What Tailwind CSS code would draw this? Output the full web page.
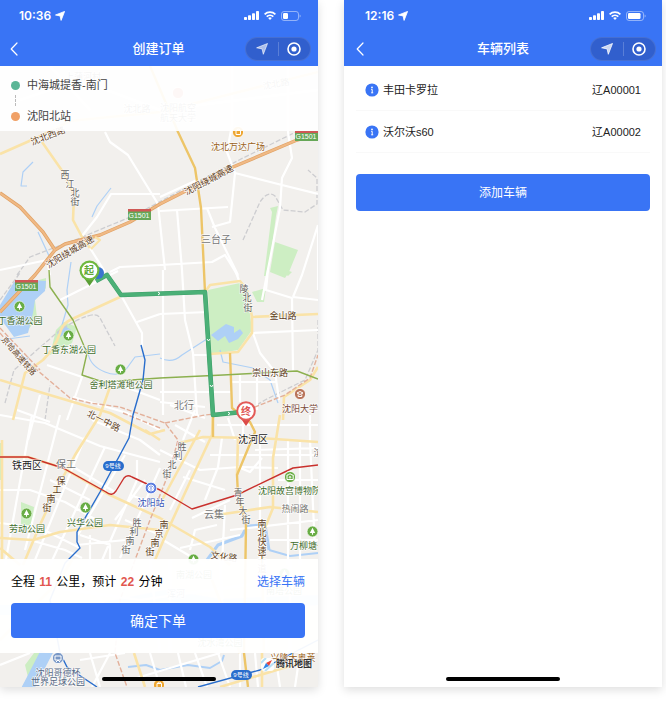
<!DOCTYPE html>
<html lang="zh-CN">
<head>
<meta charset="utf-8">
<meta name="viewport" content="width=device-width, initial-scale=1">
<title>创建订单 / 车辆列表</title>
<script src="https://cdn.jsdelivr.net/npm/@tailwindcss/browser@4"></script>
</head>
<body class="bg-white font-['Liberation_Sans','Noto_Sans_CJK_SC',sans-serif] text-[#222]">
<svg class="hidden" aria-hidden="true">
  <symbol id="nav-arrow" viewBox="0 0 12 12"><path d="M11.5 .5 7.3 11.3 6.1 5.9.6 4.8Z" fill="currentColor" stroke="currentColor" stroke-width="1" stroke-linejoin="round"/></symbol>
  <symbol id="signal" viewBox="0 0 15 9"><g fill="currentColor"><rect y="6" width="3" height="3" rx=".8"/><rect x="4" y="4.3" width="3" height="4.7" rx=".8"/><rect x="8" y="2.2" width="3" height="6.8" rx=".8"/><rect x="12" width="3" height="9" rx=".8"/></g></symbol>
  <symbol id="wifi" viewBox="0 0 12 9"><g fill="none" stroke="currentColor" stroke-width="1.8"><path d="M.6 3.3a7.8 7.8 0 0 1 10.8 0"/><path d="M2.7 5.6a4.8 4.8 0 0 1 6.6 0"/></g><path d="M6 9 4.1 7.1a2.7 2.7 0 0 1 3.8 0Z" fill="currentColor"/></symbol>
  <symbol id="back" viewBox="0 0 8 14"><path d="M7 1 1.2 7 7 13" fill="none" stroke="currentColor" stroke-width="1.2" stroke-linecap="round" stroke-linejoin="round"/></symbol>
  <symbol id="target" viewBox="0 0 14 14"><circle cx="7" cy="7" r="6" fill="none" stroke="currentColor" stroke-width="1.6"/><circle cx="7" cy="7" r="2.6" fill="currentColor"/></symbol>
  <symbol id="info" viewBox="0 0 14 14"><circle cx="7" cy="7" r="6.6" fill="#3974f5"/><circle cx="7" cy="4.4" r=".9" fill="#fff"/><path d="M6.2 6.4H7.2V9.8M6.2 9.8H8.2" fill="none" stroke="#fff"/></symbol>
  <symbol id="tree" viewBox="-7 -7 14 14"><circle r="5.8" fill="#69ad45" stroke="#fff" stroke-width=".6"/><path d="M0-4 2.9 1.6H.6V3.6H-.6V1.6H-2.9Z" fill="#fff"/></symbol>
</svg>

<main class="grid min-h-screen grid-cols-2 gap-[26px] pr-1 pb-[21px]">

  <section class="relative flex flex-col shadow-[0_3px_9px_rgba(0,0,0,0.13)]" aria-label="创建订单">
    <header class="bg-[#3974f5] text-white">
      <div class="flex h-[31px] items-center justify-between pl-[19px] pr-[17px]">
        <div class="flex items-center gap-1 font-['Inter',sans-serif] text-xs font-semibold"><span>10:36</span><svg class="size-[10px]"><use href="#nav-arrow"/></svg></div>
        <div class="flex items-center gap-[5px]">
          <svg class="h-[9px] w-[15px]"><use href="#signal"/></svg>
          <svg class="h-[9px] w-3"><use href="#wifi"/></svg>
          <svg class="h-[10px] w-5" viewBox="0 0 20 10"><rect x=".5" y=".5" width="17" height="9" rx="2.5" fill="none" stroke="#fff" stroke-opacity=".45"/><rect x="2" y="2" width="5" height="6" rx="1.2" fill="#fff"/><path d="M18.6 3.5v3a1.6 1.6 0 0 0 0-3" fill="#fff" opacity=".5"/></svg>
        </div>
      </div>
      <div class="grid h-[35px] grid-cols-[66px_1fr_66px] items-center pr-[7px] pb-1 pl-[6px] pt-1">
        <button type="button" aria-label="返回" class="ml-1 w-3"><svg class="h-[14px] w-2"><use href="#back"/></svg></button>
        <h1 class="text-center text-[13px] font-medium leading-5">创建订单</h1>
        <div class="flex h-6 items-center rounded-full border border-white/10 bg-[#315fcd]">
          <button type="button" aria-label="定位" class="grid flex-1 place-items-center text-white/60"><svg class="size-3"><use href="#nav-arrow"/></svg></button>
          <span class="h-[14px] w-px bg-white/20"></span>
          <button type="button" aria-label="关闭" class="grid flex-1 place-items-center"><svg class="size-[14px]"><use href="#target"/></svg></button>
        </div>
      </div>
    </header>

    <div class="relative flex flex-1 flex-col">
      <svg class="absolute inset-0 h-full w-full" viewBox="0 66 318 621" preserveAspectRatio="xMidYMin slice" role="img" aria-label="地图" stroke-linejoin="round">
        <rect y="66" width="318" height="621" fill="#f2f0ed"/>
        <!-- parks -->
        <g fill="#cdeec3">
          <path d="M208 290 240 283 247 292 252 330 238 350 220 353 210 353ZM275 242 298 250 289 272 285 278 270 272ZM270 208 278 206 276 216 268 276 264 276 272 212ZM275 266 292 272 288 276ZM252 292 266 288 264 302 257 302ZM21 502 34 507 31 532 21 526ZM0 443 3 443 3 480 0 480ZM28 283 46 278 46 288 35 300 37 318 28 330ZM56 330 64 322 77 327 72 343 50 355ZM34 653 46 653 28 677 25 665Z"/>
        </g>
        <!-- water -->
        <g fill="#aed0f6"><path d="M0 305 14 282 30 280 46 281 45 291 35 300 33 313 28 333 14 337 3 322 0 318ZM211 335 219 329 226 324 234 327 234 333 240 329 243 333 238 339 229 343 225 336 218 341ZM57 333 65 326 71 330 60 337ZM42 653 53 653 31 687 22 687Z"/></g>
        <g fill="none" stroke="#aed0f6" stroke-width="1.2">
          <path d="M71 262 67 290 68 305 62 325M88 353Q90 366 105 372T127 368L135 357 160 354M160 358Q172 364 182 355L210 337M220 350 223 362 253 368 270 380 278 403M33 162 23 172 21 186 27 186M111 188 97 206 92 217M38 232 50 258M0 340 30 336"/>
          <path stroke-width="3" d="M207 560 218 545 242 536 247 526 265 525 269 550"/>
          <path stroke-width="2" d="M269 550 290 556 318 553M128 667 146 665 160 670 188 665 210 668 222 661 224 655"/>
          <path stroke-width="12" d="M46 653 27 690"/><path stroke-width="10" d="M0 610 90 610 165 595 220 604 318 600" opacity=".6"/>
        </g>
        <!-- railways -->
        <g fill="none" stroke="#cdcdd0" stroke-width="1.3" stroke-dasharray="5 2">
          <path d="M17 275 30 257 80 238 135 215 195 183 243 158 300 130M0 300 20 273M243 240 260 202Q268 190 275 196L283 210 305 212 317 204V178L308 170M5 403 14 370 60 330Q95 308 100 318L115 346M318 320V350L305 380 265 400 240 415M45 420 50 385"/>
        </g>
        <!-- local streets -->
        <g fill="none" stroke="#fff" stroke-width="2.2">
          <path d="M105 132 110 142 128 155 158 204 165 270M160 194H111L97 217 82 236M90 248 105 272M0 270 47 260 50 275M110 272 120 267 160 265M160 197 197 180M232 66V125L227 152 235 173 230 222 212 227M235 173 282 185 318 194M288 66V132L292 158 282 178 280 208 262 300M160 211 228 207M177 210 182 270 185 320 193 353 197 415M160 265 212 262 225 255 238 276M207 208 215 228 238 275M318 225 302 275 293 297"/>
          <path d="M235 270 240 283M268 270 266 290 292 298 293 370M252 333 318 330M253 333 260 353 275 372 279 400M163 270V415M160 314 208 312M193 355H210M160 392H232M160 402 205 407M232 382H276M240 375V402M257 373V410M60 300 90 285 118 271M122 297 142 333V350M137 322 160 314M47 365 82 377 67 420M73 397 127 413 160 430M17 410 50 422M40 395 28 440M120 385 160 400M293 297 318 300M318 225V290"/>
          <path d="M0 415 45 423 100 446 160 462M32 415 5 565M60 415 25 550M85 437 35 560M105 447 50 565M125 455 78 535M0 490H30L65 502 100 522M0 523 40 528 80 548M50 480 90 500M70 465 115 492M137 460V480L115 530 100 565M160 468 120 558M30 540 65 550 82 558M77 545 125 540M80 535 110 545V565M90 535V565M125 520 160 535M130 495 160 505M145 480 115 520M92 420 140 440 160 455"/>
          <path d="M160 450 200 470 240 467 278 468M175 425 205 442M195 410 183 440M210 455H318M222 438 218 467 205 500M238 467 250 472 262 458M183 477 225 490M170 510 190 470M225 505 222 565M230 530 318 520M192 518 230 500M288 440V565M300 440V565M310 415V440L315 550M260 440V560M278 480H318M270 540H318M180 548 240 535M190 550 195 530 217 525M163 540 205 565M243 415V440M228 418 235 440M170 405 205 418M217 425H318M255 450 318 448"/>
          <path d="M90 653 100 687M110 653 92 687M80 660 125 653M150 653 160 687M178 653 186 687M130 680 220 653M195 653 207 687M218 653 230 687M240 653V687M255 653 258 687M275 653 280 687M300 653 295 687M0 665 30 653M85 580 140 650M150 560 160 653M170 560V653M220 560 225 650M265 560V650M290 560V650M0 580 140 600 318 575M20 100 80 80 160 110 318 90M50 66 90 110"/>
        </g>
        <!-- main roads -->
        <g fill="none" stroke="#fae3a8" stroke-width="2.6">
          <path d="M0 154 43 135 70 121 160 112 318 72M42 142 63 172 74 195 73 220 82 237 90 248"/>
          <path d="M13 420 25 373 43 360Q55 348 60 333Q62 324 70 320L120 297M205 292 210 285 240 281 247 290 252 317 252 333 238 352 210 354M252 317 318 314M0 380 43 393 90 407 110 413 150 434 165 430M110 387 100 415 75 455 55 492 40 525 23 565M0 457H28L63 468 110 495 160 518 210 547 230 565M0 538 33 540 60 532 110 525 160 530M2 440V560M180 443 203 437 260 438 318 442M213 415 212 435 190 482 167 532 155 560M280 415 273 458V508L262 535 264 653M217 515 270 507 318 512M162 500 200 430M318 367 310 380 284 397 283 420M0 548 20 565M145 430 160 440M134 653 145 687M262 653 262 687M212 580 240 653M220 687 310 660M0 640 60 580 72 560M238 439 237 475"/>
          <path stroke="#edc568" stroke-width="2.4" d="M150 66 168 108 178 132 195 168 201 208 205 292 213 415V437M230 353 232 408 250 422 255 432 237 475 238 495 246 525 244 653 248 687"/>
        </g>
        <g fill="none">
          <path stroke="#e0a265" stroke-width="3.4" d="M0 193 20 207 43 232 55 250 35 275 0 312M55 250 65 244 100 235 130 222 160 204 233 167 297 140 318 134"/>
          <path stroke="#f0b985" stroke-width="2" d="M0 193 20 207 43 232 55 250 35 275 0 312M55 250 65 244 100 235 130 222 160 204 233 167 297 140 318 134"/>
          <path stroke="#fae3a8" stroke-width="2.2" d="M95 237 100 240 91 249"/>
        </g>
        <g fill="none" stroke="#e3b09a" stroke-width="1.4" stroke-dasharray="5 2"><path d="M0 333 20 357 37 370 70 398 90 403 120 407 165 423 178 440 170 470 150 520 120 600 115 653 127 687M165 423 205 415 245 411 285 395 310 378 318 355M0 328 40 370M123 413 160 428"/></g>
        <!-- metro lines -->
        <g fill="none" stroke-width="1.4">
          <path stroke="#8cb04f" d="M49 270 50 287 73 320 87 353 82 375 103 382 160 378 223 375 297 371 318 379"/>
          <path stroke="#286dcc" d="M141 345 145 360 143 380 133 415 129 438 100 492 77 532V542L80 548 65 563 50 600 60 653 67 667 97 687M198 687 260 670 318 640"/>
          <path stroke="#c9302c" d="M0 457H28L63 468 106 492Q112 497 116 491L124 478Q127 474 132 477L160 490 192 509 237 495 293 468 318 465"/>
        </g>
        <!-- route -->
        <path d="M96 281 107 275 121 295 205 292 213 415 242 412" fill="none" stroke="#3f9f69" stroke-width="4.600"/>
        <path d="M96 281 107 275 121 295 205 292 213 415 242 412" fill="none" stroke="#4bb077" stroke-width="3.600"/>
        <g fill="none" stroke="#fff" stroke-width="1"><path d="m158 292 2 1.5-2 1.5M207 339l1.5 2 1.5-2M210 385l1.5 2 1.5-2M228 412l2 1.5-2 1.5"/></g>
        <!-- road shields -->
        <g class="font-['Liberation_Sans'] text-[7px]" fill="#fff" text-anchor="middle">
          <path fill="#66a757" d="M128 209h23v11h-23zM15 280h23v11H15zM295 131h23v10h-23z"/><path fill="#cf5855" d="M128 209h23v2.5h-23zM15 280h23v2.5H15zM295 131h23v2h-23z"/>
          <text x="139" y="218">G1501</text><text x="26" y="289">G1501</text><text x="306" y="139">G1501</text>
          <rect x="103" y="461" width="21" height="10" rx="5" fill="#286dcc"/><rect x="231" y="670" width="21" height="10" rx="5" fill="#286dcc"/>
          <g class="font-['Liberation_Sans','Noto_Sans_CJK_SC'] text-[6px]"><text x="113" y="468">9号线</text><text x="241" y="677">9号线</text></g>
        </g>
        <!-- labels -->
        <g class="font-['Noto_Sans_CJK_SC',sans-serif] text-[9px]" text-anchor="middle" stroke="#fff" stroke-opacity=".8" stroke-width="1.4" paint-order="stroke">
          <g fill="#3f6d2c"><text x="20" y="324">丁香湖公园</text><text x="69" y="353">丁香东湖公园</text><text x="121" y="388">舍利塔滩地公园</text><text x="27" y="532">劳动公园</text><text x="85" y="526">兴华公园</text><text x="258" y="494" text-anchor="start">沈阳故宫博物院</text><text x="290" y="549" text-anchor="start">万柳塘公园</text><text x="194" y="578">南湖公园</text><text x="284" y="594">南塔公园</text><text x="220" y="646">沈水湾公园</text></g>
          <g fill="#9a6220"><text x="238" y="150">沈北万达广场</text><text x="293" y="661">兴隆大奥莱</text></g>
          <text x="282" y="412" text-anchor="start" fill="#7b4a38">沈阳大学</text>
          <g fill="#777"><text x="216" y="243" class="text-[10px]">三台子</text><text x="184" y="409" class="text-[10px]">北行</text><text x="66" y="468" class="text-[10px]">保工</text><text x="214" y="518" class="text-[10px]">云集</text><text x="295" y="512">热闹路</text><text x="318" y="456">滨</text><text x="83" y="80">上蒲河村</text><text x="137" y="112">沈北路</text><text x="276" y="87" transform="rotate(-10 276 84)">沈北路</text><text x="178" y="111">沈阳航空</text><text x="178" y="121">航天大学</text></g>
          <g fill="#222" class="text-[10px]"><text x="27" y="469">铁西区</text><text x="253" y="443">沈河区</text></g>
          <text x="151" y="506" fill="#3656b8">沈阳站</text>
          <g fill="#566884"><text x="58" y="676">沈阳哥德杯</text><text x="58" y="685">世界足球公园</text><text x="176" y="597">浑河</text></g>
          <g fill="#5f3f1e"><text x="283" y="319">金山路</text><text x="270" y="376">崇山东路</text><text x="48" y="139" transform="rotate(-21 48 136)">沈北西路</text><text x="70" y="255" transform="rotate(-31 70 252)">沈阳绕城高速</text><text x="209" y="183" transform="rotate(-28 209 180)">沈阳绕城高速</text><text x="104" y="424" transform="rotate(27 104 420)">北一中路</text><text x="19" y="359" transform="rotate(49 19 356)" class="text-[8px]">京哈高速铁路</text><text x="224" y="560" transform="rotate(7 224 557)">文化路</text>
            <text><tspan x="61" y="484">保</tspan><tspan x="57" y="493">工</tspan><tspan x="51" y="502">南</tspan><tspan x="47" y="511">街</tspan></text>
            <text><tspan x="164" y="528">南</tspan><tspan x="159" y="537">京</tspan><tspan x="155" y="546">南</tspan><tspan x="150" y="555">街</tspan></text>
            <text><tspan x="262" y="527">南</tspan><tspan x="262" y="536">北</tspan><tspan x="262" y="545">快</tspan><tspan x="262" y="554">速</tspan><tspan x="262" y="563">干</tspan><tspan x="262" y="572">道</tspan></text></g>
          <g fill="#666"><text><tspan x="65" y="178">西</tspan><tspan x="70" y="187">江</tspan><tspan x="75" y="196">北</tspan><tspan x="75" y="205">街</tspan></text>
            <text><tspan x="244" y="292">陵</tspan><tspan x="247" y="301">北</tspan><tspan x="248" y="311">街</tspan></text>
            <text><tspan x="182" y="450">胜</tspan><tspan x="178" y="459">利</tspan><tspan x="172" y="468">北</tspan><tspan x="167" y="477">街</tspan></text>
            <text><tspan x="137" y="526">胜</tspan><tspan x="134" y="535">利</tspan><tspan x="130" y="544">南</tspan><tspan x="126" y="553">街</tspan></text>
            <text><tspan x="238" y="496">青</tspan><tspan x="240" y="505">年</tspan><tspan x="243" y="514">大</tspan><tspan x="246" y="523">街</tspan></text></g>
        </g>
        <!-- points of interest -->
        <g><use href="#tree" x="13" y="300" width="13" height="13"/><use href="#tree" x="62" y="329" width="13" height="13"/><use href="#tree" x="114" y="363" width="13" height="13"/><use href="#tree" x="20" y="507" width="13" height="13"/><use href="#tree" x="79" y="501" width="13" height="13"/><use href="#tree" x="306" y="525" width="13" height="13"/><use href="#tree" x="187" y="553" width="13" height="13"/><use href="#tree" x="278" y="567" width="13" height="13"/></g>
        <g stroke="#fff" stroke-width=".8"><circle cx="290" cy="477" r="5.600" fill="#69ad45"/><circle cx="300" cy="394" r="5.600" fill="#b9745a"/><circle cx="178" cy="93" r="5.600" fill="#d98a7a"/><circle cx="238" cy="132" r="5.600" fill="#eda52f"/><circle cx="159" cy="685" r="5.600" fill="#eda52f"/><circle cx="151" cy="488" r="5.800" fill="#5b7de0"/><circle cx="58" cy="658" r="5.600" fill="#7897c5"/></g>
        <g fill="none" stroke="#fff"><path d="M287 475h1.500l.7-1h1.800l.7 1h1.500v4.500H287Z"/><circle cx="290" cy="477.300" r=".8"/><path d="M236 130.500h4.500v4H236zM236.800 130.500a1.500 1.500 0 0 1 3 0M157 683.500h4.500v4H157zM157.800 683.500a1.500 1.500 0 0 1 3 0M297 393l3-1.500 3 1.500-3 1.500ZM298.200 394.500v2h3.600v-2M55 656h6v4h-6zM56 662l2-2 2 2"/><circle cx="151" cy="488" r="3"/><path d="M149.500 487h3v2h-3zM149 491l1-2M153 491l-1-2"/></g>
        <!-- start and end pins -->
        <circle cx="98" cy="273" r="6" fill="#3a74cf"/>
        <path d="M89.500 286 84 278h11Z" fill="#5a9e35"/><circle cx="89.500" cy="270.500" r="10" fill="#6fb83e"/><circle cx="89.500" cy="270.500" r="7.800" fill="#fff"/>
        <path d="M246 426 240.500 418h11Z" fill="#dc4b48"/><circle cx="246" cy="411" r="9.800" fill="#e35a57"/><circle cx="246" cy="411" r="7.800" fill="#fff"/>
        <g class="font-['Noto_Sans_CJK_SC',sans-serif] text-[10px] font-bold" text-anchor="middle"><text x="89" y="274" fill="#62a836">起</text><text x="246" y="415" fill="#e05552">终</text></g>
      </svg>

      <div class="relative flex h-[65px] flex-col justify-between bg-white/93 px-[11px] pt-[11px] pb-[7px] text-[11px] leading-4 text-[#444]">
        <div class="flex items-center gap-[7px]"><span class="size-[9px] rounded-full bg-[#5bb696]"></span><span>中海城提香-南门</span></div>
        <span class="ml-1 h-[11px] border-l border-dashed border-[#bbb]"></span>
        <div class="flex items-center gap-[7px]"><span class="size-[9px] rounded-full bg-[#f0a066]"></span><span>沈阳北站</span></div>
      </div>

      <div class="flex-1"></div>

      <div class="relative bg-white/95 pl-[11px] pr-[13px] pt-[13px] pb-[15px]">
        <div class="flex items-center justify-between text-xs leading-5 text-black">
          <p>全程 <b class="mx-px text-[#e2574f]">11</b> 公里，预计 <b class="mx-px text-[#e2574f]">22</b> 分钟</p>
          <a href="#vehicles" class="text-[#3974f5]">选择车辆</a>
        </div>
        <button type="button" class="mt-[11px] block h-[35px] w-full rounded bg-[#3974f5] text-sm text-white">确定下单</button>
      </div>

      <footer class="relative flex h-[34px] items-start justify-end pt-1 pr-[6px]">
        <div class="flex items-center gap-[2px] text-[9px] font-bold leading-[14px] text-[#333]">
          <svg class="size-[13px]" viewBox="0 0 13 13"><rect width="13" height="13" rx="3" fill="#fff" fill-opacity=".9"/><path d="M0 5 5 0M4 13 13 5" stroke="#b9e0f5" stroke-width="2"/><path d="M11 2 5 5l3 3Z" fill="#e8453c"/><path d="M2 11 5 5l3 3Z" fill="#2f86e8"/></svg>
          <span class="[text-shadow:0_0_2px_white,0_0_2px_white]">腾讯地图</span>
        </div>
        <span class="absolute bottom-[6px] left-1/2 h-1 w-[114px] -translate-x-1/2 rounded-full bg-black"></span>
      </footer>
    </div>
  </section>

  <section id="vehicles" class="relative flex flex-col bg-white shadow-[0_3px_9px_rgba(0,0,0,0.13)]" aria-label="车辆列表">
    <header class="bg-[#3974f5] text-white">
      <div class="flex h-[31px] items-center justify-between pl-[21px] pr-[16px]">
        <div class="flex items-center gap-1 font-['Inter',sans-serif] text-xs font-semibold"><span>12:16</span><svg class="size-[10px]"><use href="#nav-arrow"/></svg></div>
        <div class="flex items-center gap-[5px]">
          <svg class="h-[9px] w-[15px]"><use href="#signal"/></svg>
          <svg class="h-[9px] w-3"><use href="#wifi"/></svg>
          <svg class="h-[10px] w-5" viewBox="0 0 20 10"><rect x=".5" y=".5" width="17" height="9" rx="2.5" fill="none" stroke="#fff" stroke-opacity=".45"/><rect x="2" y="2" width="12.500" height="6" rx="1.2" fill="#fff"/><path d="M18.6 3.500v3a1.600 1.600 0 0 0 0-3" fill="#fff" opacity=".5"/></svg>
        </div>
      </div>
      <div class="grid h-[35px] grid-cols-[66px_1fr_66px] items-center pr-[6px] pb-1 pl-[6px] pt-1">
        <button type="button" aria-label="返回" class="ml-[6px] w-3"><svg class="h-[14px] w-2"><use href="#back"/></svg></button>
        <h1 class="text-center text-[13px] font-medium leading-5">车辆列表</h1>
        <div class="flex h-6 items-center rounded-full border border-white/10 bg-[#315fcd]">
          <button type="button" aria-label="定位" class="grid flex-1 place-items-center text-white/75"><svg class="size-3"><use href="#nav-arrow"/></svg></button>
          <span class="h-[14px] w-px bg-white/20"></span>
          <button type="button" aria-label="关闭" class="grid flex-1 place-items-center"><svg class="size-[14px]"><use href="#target"/></svg></button>
        </div>
      </div>
    </header>
    <div class="px-3 pt-[3px]">
      <ul class="text-[11px] leading-4">
        <li class="flex h-[42px] items-center gap-1 border-b border-[#f9f9f9] px-[9px]"><svg class="size-[14px]"><use href="#info"/></svg><span>丰田卡罗拉</span><span class="ml-auto">辽A00001</span></li>
        <li class="flex h-[42px] items-center gap-1 border-b border-[#f9f9f9] px-[9px]"><svg class="size-[14px]"><use href="#info"/></svg><span>沃尔沃s60</span><span class="ml-auto">辽A00002</span></li>
      </ul>
      <button type="button" class="mt-[21px] block h-[37px] w-full rounded bg-[#3974f5] text-xs text-white">添加车辆</button>
    </div>
    <span class="absolute bottom-[6px] left-1/2 h-1 w-[114px] -translate-x-1/2 rounded-full bg-black"></span>
  </section>
</main>
</body>
</html>
